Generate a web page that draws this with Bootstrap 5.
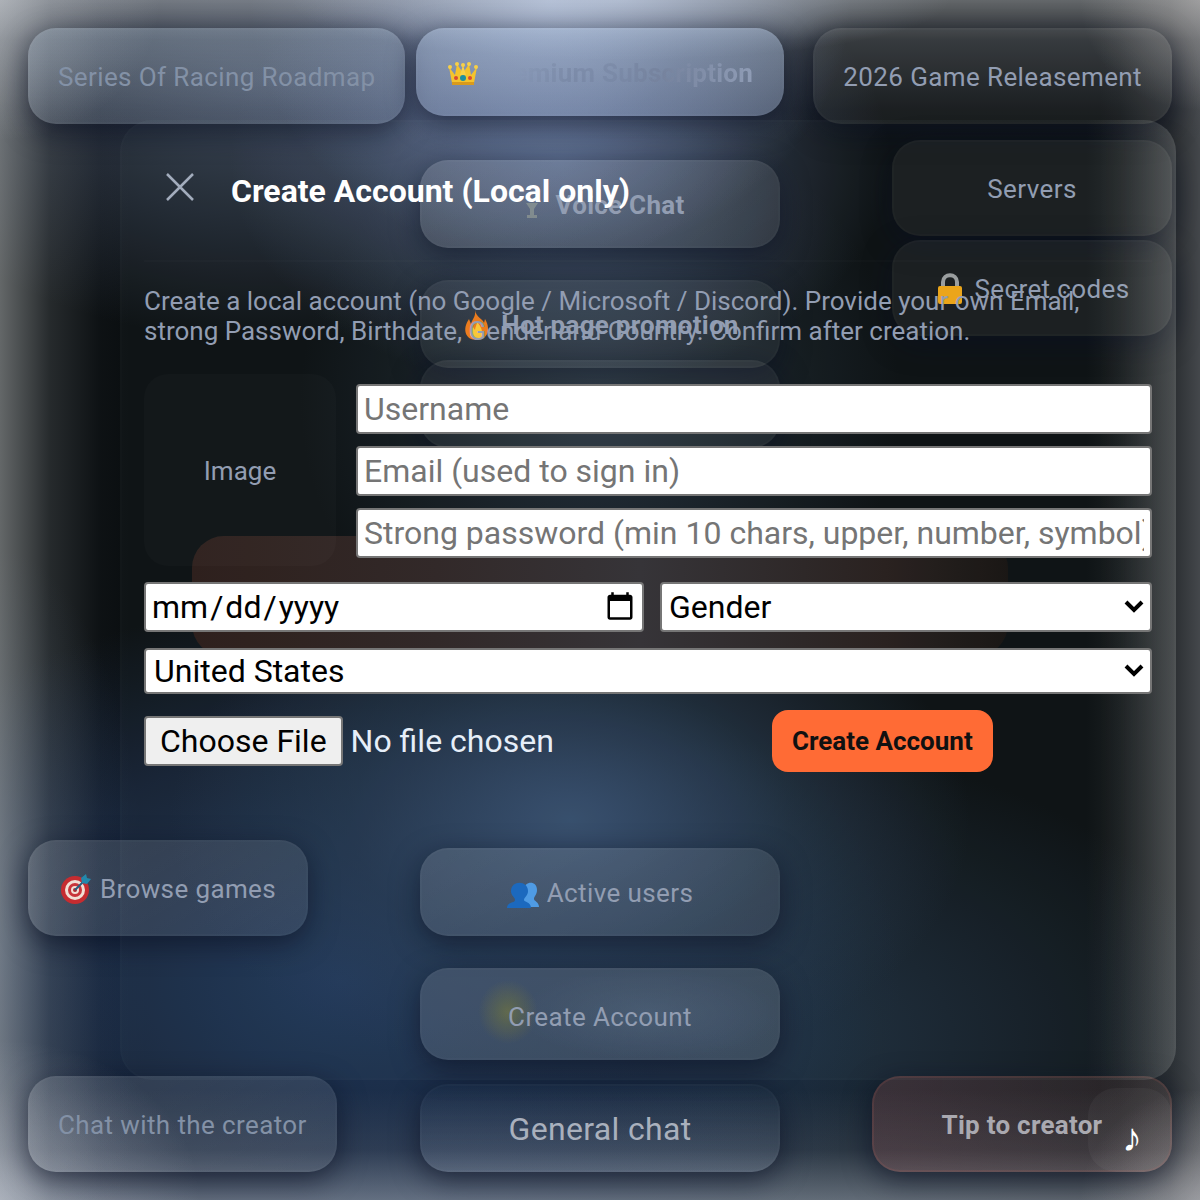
<!DOCTYPE html>
<html lang="en">
<head>
<meta charset="utf-8">
<meta name="viewport" content="width=device-width, initial-scale=1">
<title>Create Account</title>
<link href="https://cdn.jsdelivr.net/npm/bootstrap@5.3.0/dist/css/bootstrap.min.css" rel="stylesheet">
<style>
  :root { --ink: #929db2; }
  body { font-family: Roboto, "Liberation Sans", sans-serif; font-size: 26px; line-height: 30px; color: var(--ink); background: #0a0e12; }
  .stage {
    display: grid; min-height: 100vh; overflow: hidden;
    background:
      radial-gradient(160px 140px at 0 0, rgba(205,210,220,.4), transparent),
      radial-gradient(120px 110px at 100% 0, rgba(205,200,195,.4), transparent),
      radial-gradient(200px 160px at 0 100%, rgba(205,210,225,.4), transparent),
      radial-gradient(120px 110px at 100% 100%, rgba(200,195,195,.4), transparent),
      radial-gradient(330px 60px at 620px 0, rgba(205,218,240,.5), transparent),
      linear-gradient(90deg, rgba(205,208,208,.46), rgba(150,155,158,.2) 50px, rgba(100,105,120,.04) 100px, transparent 130px),
      linear-gradient(270deg, rgba(180,182,190,.34), rgba(160,162,170,.2) 30px, rgba(140,142,150,.04) 80px, transparent 100px),
      linear-gradient(180deg, rgba(205,208,212,.46), rgba(150,155,165,.24) 40px, rgba(120,125,140,.04) 110px, transparent 140px),
      linear-gradient(0deg, rgba(190,200,215,.46), rgba(140,150,170,.18) 50px, transparent 110px),
      radial-gradient(300px 260px at 550px 0, rgba(155,175,215,.8), rgba(125,145,190,.4) 50%, transparent),
      radial-gradient(330px 230px at 560px 160px, rgba(90,108,145,.75), transparent),
      radial-gradient(400px 260px at 260px 80px, rgba(66,78,100,.85), transparent),
      radial-gradient(300px 300px at 600px 400px, rgba(42,58,74,.7), transparent),
      radial-gradient(400px 260px at 570px 820px, rgba(54,78,110,.95), rgba(42,62,86,.5) 55%, transparent),
      radial-gradient(560px 380px at 340px 980px, rgba(32,56,92,.95), rgba(28,46,76,.6) 60%, transparent),
      radial-gradient(520px 300px at 720px 1040px, rgba(34,54,74,.9), transparent),
      radial-gradient(150px 400px at 0 950px, rgba(70,95,125,.4), transparent),
      #0a0e10;
  }
  .layer { grid-area: 1 / 1; min-width: 0; }
  .launcher { padding: 28px; display: grid; grid-template-columns: 1fr 368px 1fr; }
  .tile {
    display: flex; align-items: center; justify-content: center; gap: 8px; flex-shrink: 0;
    height: 96px; padding: 2px 28px 0; border: 2px solid rgba(255,255,255,.02); border-radius: 28px;
    background: linear-gradient(150deg, rgba(255,255,255,.13), rgba(255,255,255,.08)) border-box;
    box-shadow: 0 8px 28px rgba(5,10,28,.6);
    color: var(--ink); font-size: 26px; letter-spacing: .015em; line-height: 30px; white-space: nowrap;
  }
  .tile-mid { width: 360px; height: 88px; }
  .tile-side { width: 280px; }
  .tile-dim { background: rgba(255,255,255,.055) border-box; }
  .tile-left { color: #8391a6; }
  .tile-roadmap { background: linear-gradient(180deg, rgba(175,195,215,.3), rgba(170,185,210,.2)) border-box; }
  .tile svg { width: 32px; height: 32px; flex-shrink: 0; }
  .strong-label { font-weight: 700; letter-spacing: .01em; }
  .tile-premium { width: 368px; background: linear-gradient(180deg, rgba(180,200,228,.44), rgba(155,172,205,.42)) border-box; }
  .fade-label { background: linear-gradient(90deg, transparent 12%, rgba(112,126,155,.45) 30%, rgba(112,126,155,.35) 52%, #76839e 66%, #8f9cb5); -webkit-background-clip: text; background-clip: text; color: transparent; }
  .tile-account { height: 92px; padding-top: 6px; background: radial-gradient(30px 32px at 88px 44px, rgba(140,135,40,.45), transparent), radial-gradient(130px 46px at 230px 46px, rgba(110,140,170,.22), transparent), rgba(255,255,255,.12); background-origin: border-box; }
  .tile-general { font-size: 32px; letter-spacing: .01em; color: #a9b0bd; background: linear-gradient(180deg, transparent, rgba(200,215,240,.14)) border-box; }
  .tile-tip { width: 300px; color: #aaa9b0; border-color: rgba(200,100,90,.14); background: linear-gradient(90deg, rgba(180,90,80,.22), rgba(160,120,110,.16)) border-box; }
  .ember { width: 816px; height: 120px; flex-shrink: 0; border-radius: 32px; background: linear-gradient(90deg, #2a1b17, #2e2424 30%, #322f33 55%, #261d1b 85%, #15110f); }
  .dialog-panel {
    margin: 120px 24px 120px 120px; padding: 0 22px; border: 2px solid rgba(255,255,255,.01); border-radius: 32px;
    background: linear-gradient(270deg, rgba(225,225,220,.16), rgba(220,220,215,.09) 32px, transparent 90px) border-box, rgba(160,185,180,.04);
    z-index: 1;
  }
  .panel-head { height: 140px; padding: 0 18px; gap: 35px; border-bottom: 2px solid rgba(255,255,255,.015); }
  .panel-title { margin: 0; font-size: 32px; line-height: 38px; font-weight: 700; color: #fff; }
  .close-btn { border: 0; padding: 0 0 8px; background: none; width: 34px; height: 42px; display: flex; align-items: center; }
  .intro { margin: 24px 0 28px; line-height: 30px; }
  .photo-slot { width: 192px; height: 192px; padding-top: 2px; flex-shrink: 0; border-radius: 24px; background: rgba(255,255,255,.02); }
  .field-stack { gap: 12px; padding-top: 2px; }
  .field { width: 100%; height: 50px; padding: 0 6px; border: 2px solid #767676; border-radius: 4px; background: #fff; color: #000; font-size: 32px; line-height: 38px; }
  .field::placeholder { color: #757575; opacity: 1; }
  .field-date { flex: 0 1 500px; padding-right: 4px; }
  .field-date::-webkit-datetime-edit-text { padding: 0 2px; }
  .pick-gender { flex: 1 1 0; min-width: 0; }
  .pick { appearance: none; padding: 0 7px; background: #fff url("data:image/svg+xml,%3Csvg xmlns='http://www.w3.org/2000/svg' viewBox='0 0 20 14'%3E%3Cpath d='M2 2l8 8 8-8' fill='none' stroke='%23000' stroke-width='4'/%3E%3C/svg%3E") no-repeat right 6px center / 20px 14px; }
  .pick-low { height: 46px; padding: 0 8px; }
  .file-field { flex: 1 1 0; min-width: 0; color: #e6eef8; font-size: 32px; line-height: 38px; }
  .file-field::file-selector-button { height: 50px; margin: 0 8px 0 0; padding: 0 14px; border: 2px solid #767676; border-radius: 4px; background: #efefef; color: #000; font-size: 32px; line-height: 38px; }
  .submit-btn { height: 62px; padding: 0 20px; border: 0; border-radius: 16px; background: #ff6b35; color: #111; font-size: 26px; font-weight: 700; line-height: 30px; white-space: nowrap; }
  .submit-wrap { flex: 0 0 380px; }
  .music-wrap { justify-self: end; align-self: end; margin: 28px; z-index: 2; }
  .music-btn { width: 84px; height: 84px; border: 0; border-radius: 28px; background: rgba(255,255,255,.04); color: #fff; font: 40px/40px "Liberation Sans", sans-serif; padding: 14px 0 0 4px; }
</style>
<script src="https://cdn.jsdelivr.net/npm/bootstrap@5.3.0/dist/js/bootstrap.bundle.min.js"></script>
</head>
<body>
<div class="stage">
  <nav class="layer launcher" aria-label="Launcher">
    <div class="d-flex flex-column align-items-start">
      <button class="tile tile-left tile-roadmap" type="button">Series Of Racing Roadmap</button>
      <button class="tile tile-side mt-auto" type="button">
        <svg viewBox="0 0 32 32" aria-hidden="true"><circle cx="15" cy="17" r="14" fill="#c62c30"/><circle cx="15" cy="17" r="10" fill="#f1dfd5"/><circle cx="15" cy="17" r="7" fill="#c9353a"/><circle cx="15" cy="17" r="4" fill="#f1dfd5"/><circle cx="15" cy="17" r="2" fill="#b02a30"/><path d="M15 17L24 8" stroke="#285f80" stroke-width="2"/><path d="M22 10l-1-5 5-4 1 4 4 1-4 5z" fill="#2388ab"/></svg>
        Browse games</button>
      <button class="tile tile-left" type="button" style="margin-top:140px">Chat with the creator</button>
    </div>
    <div class="d-flex flex-column align-items-center">
      <button class="tile tile-mid tile-premium strong-label" type="button">
        <svg viewBox="0 0 32 32" aria-hidden="true"><path d="M2 10l6 8 2-11 6 9 6-9 2 11 6-8-3 16H5z" fill="#f5c32c"/><g fill="#f8d046"><circle cx="3" cy="10" r="2"/><circle cx="10" cy="7" r="2"/><circle cx="16" cy="8" r="2"/><circle cx="22" cy="7" r="2"/><circle cx="29" cy="10" r="2"/><path d="M13 18l3-10 3 10z"/></g><path d="M5 25h22v3H5z" fill="#d99a1c"/><circle cx="16" cy="21" r="3" fill="#1d8fa0"/><circle cx="9" cy="21" r="2" fill="#d94a35"/><circle cx="23" cy="21" r="2" fill="#d94a35"/></svg>
        <span class="fade-label">Premium Subscription</span></button>
      <button class="tile tile-mid strong-label" type="button" style="margin-top:44px">
        <svg viewBox="0 0 32 32" aria-hidden="true"><path d="M10 14h12l-4 6v6h3v3H11v-3h3v-6z" fill="#8d9793" opacity=".75"/></svg>
        Voice Chat</button>
      <button class="tile tile-mid tile-dim strong-label" type="button" style="margin-top:32px">
        <svg viewBox="0 0 32 32" aria-hidden="true"><path d="M14 1c1 7 8 9 9 13l1-4c5 8 5 20-8 21C4 31 1 20 8 10l2 5c1-5 5-7 4-14z" fill="#ef7a19"/><path d="M16 13c6 6 8 17 0 17-9 0-8-9-4-12l2 3c0-3 2-5 2-8z" fill="#fdc935"/></svg>
        Hot page promotion</button>
      <div class="tile tile-mid tile-dim" style="margin-top:-8px"></div>
      <div class="ember" style="margin-top:88px"></div>
      <button class="tile tile-mid mt-auto" type="button">
        <svg viewBox="0 0 32 32" aria-hidden="true"><path d="M17 13c0-9 13-10 13 0 0 5-3 6-3 9 0 2 5 3 5 8H17z" fill="#4c9be6"/><path d="M4 14c0-11 17-11 17 0 0 5-4 6-4 9 0 2 7 2 7 8H0c0-6 8-5 8-8s-4-4-4-9z" fill="#1767bf"/></svg>
        Active users</button>
      <button class="tile tile-mid tile-account" type="button" style="margin-top:32px">Create Account</button>
      <button class="tile tile-mid tile-general" type="button" style="margin-top:24px">General chat</button>
    </div>
    <div class="d-flex flex-column align-items-end">
      <button class="tile tile-dim" type="button">2026 Game Releasement</button>
      <button class="tile tile-side tile-dim" type="button" style="margin-top:16px">Servers</button>
      <button class="tile tile-side tile-dim" type="button" style="margin-top:4px">
        <svg viewBox="0 0 32 32" aria-hidden="true"><path d="M9 15V9c0-9 14-9 14 0v6" fill="none" stroke="#9b9e9f" stroke-width="4"/><rect x="4" y="13" width="24" height="18" rx="2" fill="#efa514"/></svg>
        Secret codes</button>
      <button class="tile tile-tip strong-label mt-auto" type="button">Tip to creator</button>
    </div>
  </nav>

  <main class="layer dialog-panel" role="dialog" aria-labelledby="dialog-title">
    <header class="panel-head d-flex align-items-center">
      <button class="close-btn" type="button" aria-label="Close"><svg width="34" height="34" viewBox="0 0 34 34"><path d="M5 4l26 26M31 4L5 30" stroke="#a3adbd" stroke-width="2.5" fill="none"/></svg></button>
      <h1 class="panel-title" id="dialog-title">Create Account (Local only)</h1>
    </header>
    <p class="intro">Create a local account (no Google / Microsoft / Discord). Provide your own Email, strong Password, Birthdate, Gender and Country. Confirm after creation.</p>
    <form class="d-flex flex-column gap-3">
      <div class="d-flex align-items-center" style="gap:20px">
        <div class="photo-slot d-flex align-items-center justify-content-center">Image</div>
        <div class="field-stack d-flex flex-column flex-grow-1">
          <input class="field" type="text" placeholder="Username" aria-label="Username">
          <input class="field" type="email" placeholder="Email (used to sign in)" aria-label="Email">
          <input class="field" type="password" placeholder="Strong password (min 10 chars, upper, number, symbol)" aria-label="Password">
        </div>
      </div>
      <div class="d-flex gap-3">
        <input class="field field-date" type="date" aria-label="Birthdate">
        <select class="field pick pick-gender" aria-label="Gender"><option>Gender</option></select>
      </div>
      <select class="field pick pick-low" aria-label="Country"><option>United States</option></select>
      <div class="d-flex align-items-center">
        <input class="file-field" type="file" aria-label="Profile image">
        <div class="submit-wrap"><button class="submit-btn" type="button">Create Account</button></div>
      </div>
    </form>
  </main>

  <div class="layer music-wrap"><button class="music-btn" type="button" aria-label="Music">♪</button></div>
</div>
</body>
</html>
